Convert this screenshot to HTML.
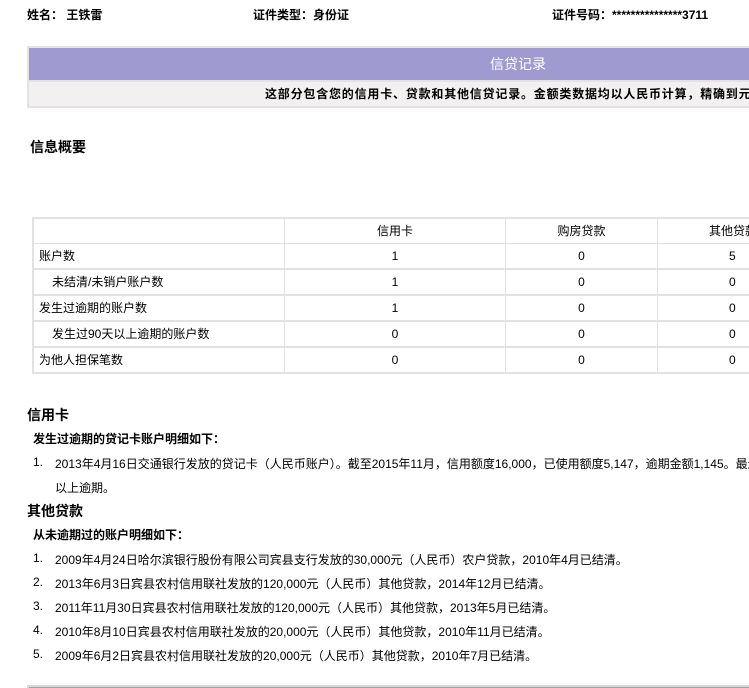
<!DOCTYPE html>
<html><head><meta charset="utf-8"><style>
html,body{margin:0;padding:0;width:749px;height:688px;overflow:hidden;background:#fff;font-family:"Liberation Sans","Noto Sans CJK SC","WenQuanYi Zen Hei",sans-serif;font-size:12px;color:#000}
#w{position:relative;width:749px;height:688px;overflow:hidden}
.a{position:absolute;white-space:nowrap}
.b{font-weight:bold}
.cell{position:absolute;border:1px solid #e2e2e2;box-sizing:border-box;line-height:24px;white-space:nowrap;overflow:hidden}
</style></head><body><div id="w">
<div class="a b" style="left:27px;top:6px">姓名：&nbsp;王铁雷</div>
<div class="a b" style="left:253px;top:6px">证件类型：身份证</div>
<div class="a b" style="left:552px;top:6px">证件号码：***************3711</div>

<div class="a" style="left:27px;top:46px;width:722px;height:62px;background:#e4e2e2"></div>
<div class="a" style="left:29px;top:48px;width:720px;height:32px;background:#9f9ad0;color:#fff;font-size:14px;line-height:32px;overflow:hidden"><span style="position:absolute;left:461px">信贷记录</span></div>
<div class="a b" style="left:29px;top:82px;width:720px;height:24px;background:#f2f0f0;line-height:24px;overflow:hidden"><span style="position:absolute;left:236px;letter-spacing:0.8px">这部分包含您的信用卡、贷款和其他信贷记录。金额类数据均以人民币计算，精确到元</span></div>

<div class="a b" style="left:30px;top:137px;font-size:14px">信息概要</div>

<div class="a" style="left:32px;top:217px;width:717px;height:157px;border:1px solid #e2e2e2;border-right:none;box-sizing:border-box"></div>
<div class="cell" style="left:33px;top:218px;width:252px;height:26px"></div>
<div class="cell" style="left:284px;top:218px;width:222px;height:26px;text-align:center">信用卡</div>
<div class="cell" style="left:505px;top:218px;width:153px;height:26px;text-align:center">购房贷款</div>
<div class="cell" style="left:657px;top:218px;width:92px;height:26px;border-right:none"><span style="position:absolute;left:51px">其他贷款</span></div>

<div class="cell" style="left:33px;top:243px;width:252px;height:26px;padding-left:5px">账户数</div>
<div class="cell" style="left:284px;top:243px;width:222px;height:26px;text-align:center">1</div>
<div class="cell" style="left:505px;top:243px;width:153px;height:26px;text-align:center">0</div>
<div class="cell" style="left:657px;top:243px;width:92px;height:26px;border-right:none"><span style="position:absolute;left:71px">5</span></div>

<div class="cell" style="left:33px;top:269px;width:252px;height:26px;padding-left:18px">未结清/未销户账户数</div>
<div class="cell" style="left:284px;top:269px;width:222px;height:26px;text-align:center">1</div>
<div class="cell" style="left:505px;top:269px;width:153px;height:26px;text-align:center">0</div>
<div class="cell" style="left:657px;top:269px;width:92px;height:26px;border-right:none"><span style="position:absolute;left:71px">0</span></div>

<div class="cell" style="left:33px;top:295px;width:252px;height:26px;padding-left:5px">发生过逾期的账户数</div>
<div class="cell" style="left:284px;top:295px;width:222px;height:26px;text-align:center">1</div>
<div class="cell" style="left:505px;top:295px;width:153px;height:26px;text-align:center">0</div>
<div class="cell" style="left:657px;top:295px;width:92px;height:26px;border-right:none"><span style="position:absolute;left:71px">0</span></div>

<div class="cell" style="left:33px;top:321px;width:252px;height:26px;padding-left:18px">发生过90天以上逾期的账户数</div>
<div class="cell" style="left:284px;top:321px;width:222px;height:26px;text-align:center">0</div>
<div class="cell" style="left:505px;top:321px;width:153px;height:26px;text-align:center">0</div>
<div class="cell" style="left:657px;top:321px;width:92px;height:26px;border-right:none"><span style="position:absolute;left:71px">0</span></div>

<div class="cell" style="left:33px;top:347px;width:252px;height:26px;padding-left:5px">为他人担保笔数</div>
<div class="cell" style="left:284px;top:347px;width:222px;height:26px;text-align:center">0</div>
<div class="cell" style="left:505px;top:347px;width:153px;height:26px;text-align:center">0</div>
<div class="cell" style="left:657px;top:347px;width:92px;height:26px;border-right:none"><span style="position:absolute;left:71px">0</span></div>

<div class="a b" style="left:27px;top:405px;font-size:14px">信用卡</div>
<div class="a b" style="left:33px;top:430px">发生过逾期的贷记卡账户明细如下：</div>
<div class="a" style="left:33px;top:455px">1.</div>
<div class="a" style="left:55px;top:455px;width:694px;overflow:hidden">2013年4月16日交通银行发放的贷记卡（人民币账户）。截至2015年11月，信用额度16,000，已使用额度5,147，逾期金额1,145。最近5年内有1个月处于逾期状态</div>
<div class="a" style="left:55px;top:479px">以上逾期。</div>

<div class="a b" style="left:27px;top:501px;font-size:14px">其他贷款</div>
<div class="a b" style="left:33px;top:526px">从未逾期过的账户明细如下：</div>
<div class="a" style="left:33px;top:551px">1.</div><div class="a" style="left:55px;top:551px">2009年4月24日哈尔滨银行股份有限公司宾县支行发放的30,000元（人民币）农户贷款，2010年4月已结清。</div>
<div class="a" style="left:33px;top:575px">2.</div><div class="a" style="left:55px;top:575px">2013年6月3日宾县农村信用联社发放的120,000元（人民币）其他贷款，2014年12月已结清。</div>
<div class="a" style="left:33px;top:599px">3.</div><div class="a" style="left:55px;top:599px">2011年11月30日宾县农村信用联社发放的120,000元（人民币）其他贷款，2013年5月已结清。</div>
<div class="a" style="left:33px;top:623px">4.</div><div class="a" style="left:55px;top:623px">2010年8月10日宾县农村信用联社发放的20,000元（人民币）其他贷款，2010年11月已结清。</div>
<div class="a" style="left:33px;top:647px">5.</div><div class="a" style="left:55px;top:647px">2009年6月2日宾县农村信用联社发放的20,000元（人民币）其他贷款，2010年7月已结清。</div>

<div class="a" style="left:27px;top:685px;width:722px;height:3px;background:#d8d8e4"></div>
<div class="a" style="left:29px;top:687px;width:720px;height:1px;background:#9f9ad0"></div>
</div></body></html>
